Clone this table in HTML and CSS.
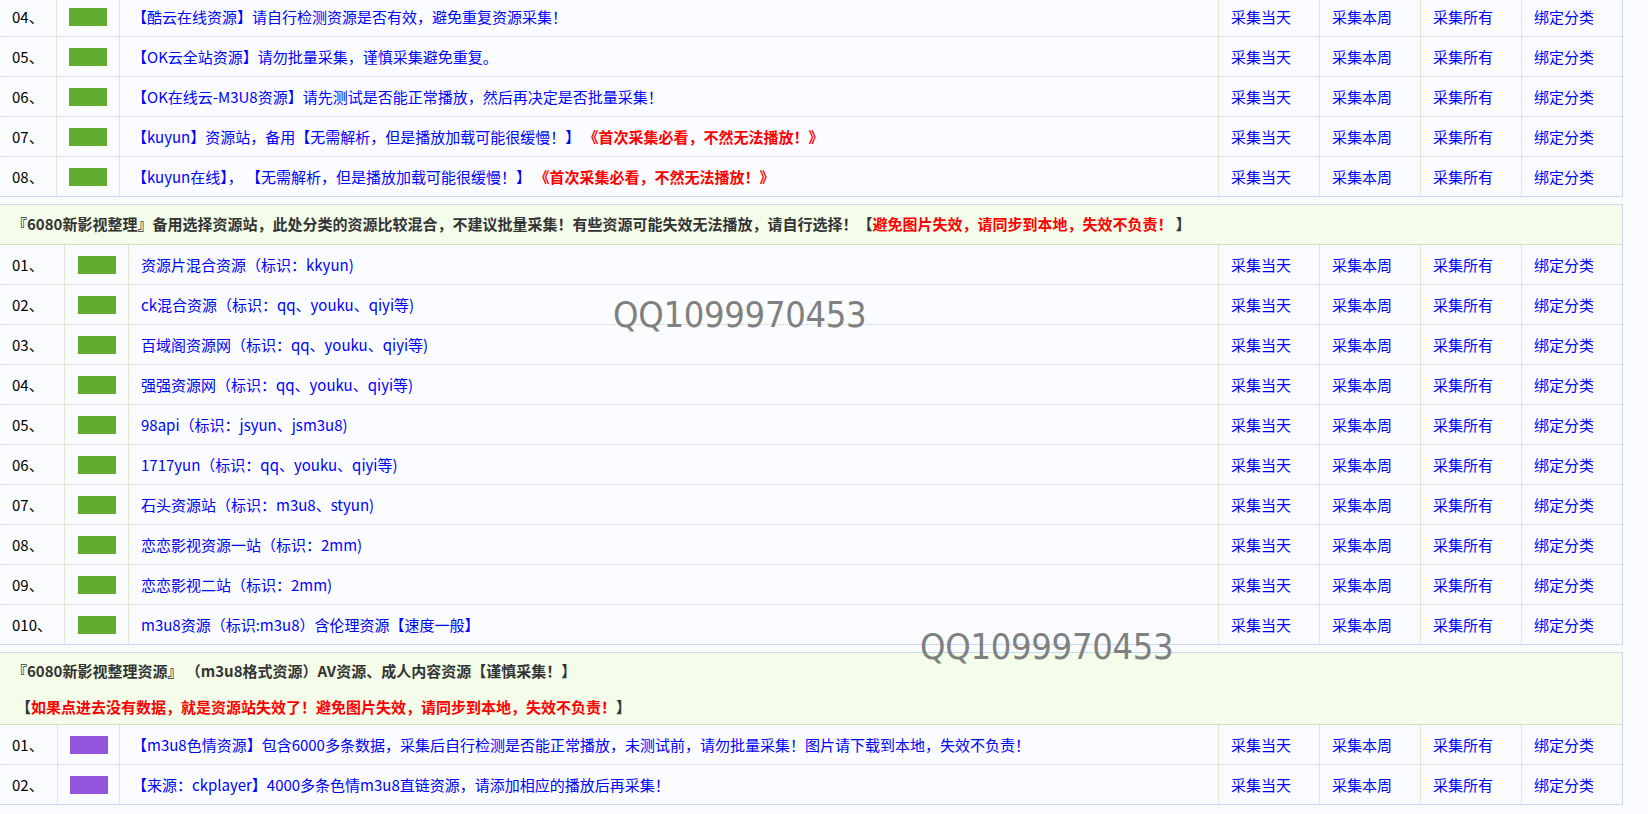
FILE: index.html
```html
<!DOCTYPE html>
<html lang="zh-CN">
<head>
    <meta charset="UTF-8">
    <title>资源库列表</title>
    <link rel="stylesheet" href="styles.css">
</head>
<body>
<div class="list list-a first">
    <div class="row"><div class="cell num">04、</div><div class="cell tag"><span class="swatch"></span></div><div class="cell name"><a href="#">【酷云在线资源】请自行检测资源是否有效，避免重复资源采集！</a></div><div class="cell act"><a href="#">采集当天</a></div><div class="cell act"><a href="#">采集本周</a></div><div class="cell act"><a href="#">采集所有</a></div><div class="cell act"><a href="#">绑定分类</a></div></div>
    <div class="row"><div class="cell num">05、</div><div class="cell tag"><span class="swatch"></span></div><div class="cell name"><a href="#">【OK云全站资源】请勿批量采集，谨慎采集避免重复。</a></div><div class="cell act"><a href="#">采集当天</a></div><div class="cell act"><a href="#">采集本周</a></div><div class="cell act"><a href="#">采集所有</a></div><div class="cell act"><a href="#">绑定分类</a></div></div>
    <div class="row"><div class="cell num">06、</div><div class="cell tag"><span class="swatch"></span></div><div class="cell name"><a href="#">【OK在线云-M3U8资源】请先测试是否能正常播放，然后再决定是否批量采集！</a></div><div class="cell act"><a href="#">采集当天</a></div><div class="cell act"><a href="#">采集本周</a></div><div class="cell act"><a href="#">采集所有</a></div><div class="cell act"><a href="#">绑定分类</a></div></div>
    <div class="row"><div class="cell num">07、</div><div class="cell tag"><span class="swatch"></span></div><div class="cell name"><a href="#">【kuyun】资源站，备用【无需解析，但是播放加载可能很缓慢！】 <b class="red">《首次采集必看，不然无法播放！》</b></a></div><div class="cell act"><a href="#">采集当天</a></div><div class="cell act"><a href="#">采集本周</a></div><div class="cell act"><a href="#">采集所有</a></div><div class="cell act"><a href="#">绑定分类</a></div></div>
    <div class="row"><div class="cell num">08、</div><div class="cell tag"><span class="swatch"></span></div><div class="cell name"><a href="#">【kuyun在线】， 【无需解析，但是播放加载可能很缓慢！】 <b class="red">《首次采集必看，不然无法播放！》</b></a></div><div class="cell act"><a href="#">采集当天</a></div><div class="cell act"><a href="#">采集本周</a></div><div class="cell act"><a href="#">采集所有</a></div><div class="cell act"><a href="#">绑定分类</a></div></div>
</div>

<div class="list list-b">
    <div class="head">
        <div class="head-line">『6080新影视整理』备用选择资源站，此处分类的资源比较混合，不建议批量采集！有些资源可能失效无法播放，请自行选择！【<span class="red">避免图片失效，请同步到本地，失效不负责！</span> 】</div>
    </div>
    <div class="row"><div class="cell num">01、</div><div class="cell tag"><span class="swatch"></span></div><div class="cell name"><a href="#">资源片混合资源（标识：kkyun)</a></div><div class="cell act"><a href="#">采集当天</a></div><div class="cell act"><a href="#">采集本周</a></div><div class="cell act"><a href="#">采集所有</a></div><div class="cell act"><a href="#">绑定分类</a></div></div>
    <div class="row"><div class="cell num">02、</div><div class="cell tag"><span class="swatch"></span></div><div class="cell name"><a href="#">ck混合资源（标识：qq、youku、qiyi等)</a></div><div class="cell act"><a href="#">采集当天</a></div><div class="cell act"><a href="#">采集本周</a></div><div class="cell act"><a href="#">采集所有</a></div><div class="cell act"><a href="#">绑定分类</a></div></div>
    <div class="row"><div class="cell num">03、</div><div class="cell tag"><span class="swatch"></span></div><div class="cell name"><a href="#">百域阁资源网（标识：qq、youku、qiyi等)</a></div><div class="cell act"><a href="#">采集当天</a></div><div class="cell act"><a href="#">采集本周</a></div><div class="cell act"><a href="#">采集所有</a></div><div class="cell act"><a href="#">绑定分类</a></div></div>
    <div class="row"><div class="cell num">04、</div><div class="cell tag"><span class="swatch"></span></div><div class="cell name"><a href="#">强强资源网（标识：qq、youku、qiyi等)</a></div><div class="cell act"><a href="#">采集当天</a></div><div class="cell act"><a href="#">采集本周</a></div><div class="cell act"><a href="#">采集所有</a></div><div class="cell act"><a href="#">绑定分类</a></div></div>
    <div class="row"><div class="cell num">05、</div><div class="cell tag"><span class="swatch"></span></div><div class="cell name"><a href="#">98api（标识：jsyun、jsm3u8)</a></div><div class="cell act"><a href="#">采集当天</a></div><div class="cell act"><a href="#">采集本周</a></div><div class="cell act"><a href="#">采集所有</a></div><div class="cell act"><a href="#">绑定分类</a></div></div>
    <div class="row"><div class="cell num">06、</div><div class="cell tag"><span class="swatch"></span></div><div class="cell name"><a href="#">1717yun（标识：qq、youku、qiyi等)</a></div><div class="cell act"><a href="#">采集当天</a></div><div class="cell act"><a href="#">采集本周</a></div><div class="cell act"><a href="#">采集所有</a></div><div class="cell act"><a href="#">绑定分类</a></div></div>
    <div class="row"><div class="cell num">07、</div><div class="cell tag"><span class="swatch"></span></div><div class="cell name"><a href="#">石头资源站（标识：m3u8、styun)</a></div><div class="cell act"><a href="#">采集当天</a></div><div class="cell act"><a href="#">采集本周</a></div><div class="cell act"><a href="#">采集所有</a></div><div class="cell act"><a href="#">绑定分类</a></div></div>
    <div class="row"><div class="cell num">08、</div><div class="cell tag"><span class="swatch"></span></div><div class="cell name"><a href="#">恋恋影视资源一站（标识：2mm)</a></div><div class="cell act"><a href="#">采集当天</a></div><div class="cell act"><a href="#">采集本周</a></div><div class="cell act"><a href="#">采集所有</a></div><div class="cell act"><a href="#">绑定分类</a></div></div>
    <div class="row"><div class="cell num">09、</div><div class="cell tag"><span class="swatch"></span></div><div class="cell name"><a href="#">恋恋影视二站（标识：2mm)</a></div><div class="cell act"><a href="#">采集当天</a></div><div class="cell act"><a href="#">采集本周</a></div><div class="cell act"><a href="#">采集所有</a></div><div class="cell act"><a href="#">绑定分类</a></div></div>
    <div class="row"><div class="cell num">010、</div><div class="cell tag"><span class="swatch"></span></div><div class="cell name"><a href="#">m3u8资源（标识:m3u8）含伦理资源【速度一般】</a></div><div class="cell act"><a href="#">采集当天</a></div><div class="cell act"><a href="#">采集本周</a></div><div class="cell act"><a href="#">采集所有</a></div><div class="cell act"><a href="#">绑定分类</a></div></div>
</div>

<div class="list list-c">
    <div class="head double">
        <div class="head-line">『6080新影视整理资源』 （m3u8格式资源）AV资源、成人内容资源【谨慎采集！】</div>
        <div class="head-line indent">【<span class="red">如果点进去没有数据，就是资源站失效了！避免图片失效，请同步到本地，失效不负责！</span>】</div>
    </div>
    <div class="row"><div class="cell num">01、</div><div class="cell tag"><span class="swatch adult"></span></div><div class="cell name"><a href="#">【m3u8色情资源】包含6000多条数据，采集后自行检测是否能正常播放，未测试前，请勿批量采集！图片请下载到本地，失效不负责！</a></div><div class="cell act"><a href="#">采集当天</a></div><div class="cell act"><a href="#">采集本周</a></div><div class="cell act"><a href="#">采集所有</a></div><div class="cell act"><a href="#">绑定分类</a></div></div>
    <div class="row"><div class="cell num">02、</div><div class="cell tag"><span class="swatch adult"></span></div><div class="cell name"><a href="#">【来源：ckplayer】4000多条色情m3u8直链资源，请添加相应的播放后再采集！</a></div><div class="cell act"><a href="#">采集当天</a></div><div class="cell act"><a href="#">采集本周</a></div><div class="cell act"><a href="#">采集所有</a></div><div class="cell act"><a href="#">绑定分类</a></div></div>
</div>

<div class="mark mark-one">QQ1099970453</div>
<div class="mark mark-two">QQ1099970453</div>
</body>
</html>
```

FILE: styles.css
```css
body {
    margin: 0;
    background: #fafcff;
    font-family: "Noto Sans CJK SC", "Noto Sans", sans-serif;
    font-size: 15px;
    color: #000;
    overflow: hidden;
}

a {
    color: #0000ff;
    text-decoration: none;
}

.red {
    color: #ff0000;
    font-weight: bold;
}

.list {
    width: 1624px;
    margin: 0 0 7px -1px;
    border: 1px solid #c5daf0;
    box-sizing: border-box;
    background: #fafcff;
}

.first {
    margin-top: -4px;
}

.head {
    background: #f3fdea;
    border-bottom: 1px solid #cfe2b8;
    padding: 1px 12px 2px;
    color: #333;
    font-weight: bold;
}

.head.double {
    padding: 0 12px;
}

.head-line {
    line-height: 36px;
    white-space: nowrap;
}

.double .head-line:last-child {
    line-height: 35px;
}

.indent {
    padding-left: 4px;
}

.row {
    display: grid;
    height: 40px;
    border-bottom: 1px dotted #c9d9ad;
    box-sizing: border-box;
}

.row:last-child {
    border-bottom: none;
    height: 39px;
}

.list-a .row {
    grid-template-columns: 57px 63px 1fr 101px 101px 101px 100px;
}

.list-b .row {
    grid-template-columns: 65px 64px 1fr 101px 101px 101px 100px;
}

.list-c .row {
    grid-template-columns: 58px 62px 1fr 101px 101px 101px 100px;
}

.cell {
    display: flex;
    align-items: center;
    padding-left: 12px;
    border-right: 1px dotted #c9d9ad;
    white-space: pre;
    overflow: hidden;
}

.cell:last-child {
    border-right: none;
}

.tag {
    justify-content: center;
    padding-left: 0;
}

.swatch {
    display: block;
    width: 38px;
    height: 18px;
    background: #61ad2f;
}

.swatch.adult {
    background: #9355dd;
}

.mark {
    position: absolute;
    font-family: "DejaVu Sans Condensed", "DejaVu Sans", sans-serif;
    font-size: 36px;
    letter-spacing: -0.3px;
    color: #808080;
    line-height: 1;
}

.mark-one {
    left: 613px;
    top: 297px;
}

.mark-two {
    left: 920px;
    top: 629px;
}
```
